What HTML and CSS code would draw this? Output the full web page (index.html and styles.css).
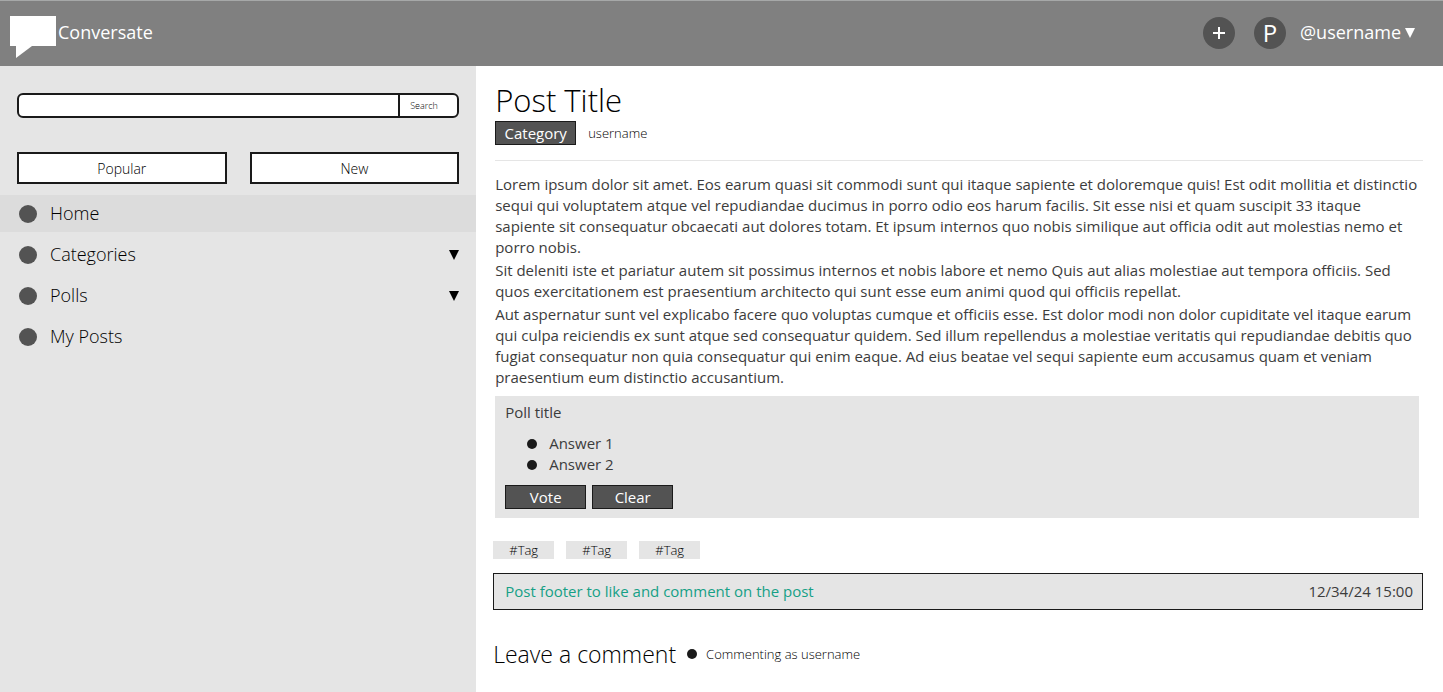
FILE: index.html
```html
<!DOCTYPE html>
<html lang="en">
<head>
<meta charset="utf-8">
<meta name="viewport" content="width=device-width, initial-scale=1">
<title>Conversate</title>
<link rel="stylesheet" href="styles.css">
</head>
<body>
<header class="topbar">
  <a class="brand" href="#">
    <svg class="brand-logo" viewBox="0 0 46 43" aria-hidden="true"><path d="M0 1H46V31H22L6 43V31H0Z" fill="#fff"/></svg>
    <span>Conversate</span>
  </a>
  <div class="topbar-actions">
    <div class="round-buttons">
      <button class="round-button" type="button" aria-label="New post"><svg class="plus" viewBox="0 0 12 12" aria-hidden="true"><path d="M6 0V12M0 6H12" stroke="#fff" stroke-width="2"/></svg></button>
      <button class="round-button" type="button">P</button>
    </div>
    <button class="account" type="button">@username<svg class="caret" viewBox="0 0 10 10" aria-hidden="true"><path d="M0 0H10L5 10Z" fill="currentColor"/></svg></button>
  </div>
</header>
<div class="layout">
  <aside class="sidebar">
    <form class="search">
      <input class="search-input" type="search" aria-label="Search posts">
      <button class="search-button" type="button">Search</button>
    </form>
    <div class="sorts">
      <button class="sort" type="button">Popular</button>
      <button class="sort" type="button">New</button>
    </div>
    <nav class="menu">
      <a class="menu-item active" href="#"><span class="menu-dot"></span>Home</a>
      <a class="menu-item" href="#"><span class="menu-dot"></span>Categories<svg class="caret menu-caret" viewBox="0 0 10 10" aria-hidden="true"><path d="M0 0H10L5 10Z" fill="currentColor"/></svg></a>
      <a class="menu-item" href="#"><span class="menu-dot"></span>Polls<svg class="caret menu-caret" viewBox="0 0 10 10" aria-hidden="true"><path d="M0 0H10L5 10Z" fill="currentColor"/></svg></a>
      <a class="menu-item" href="#"><span class="menu-dot"></span>My Posts</a>
    </nav>
  </aside>
  <main class="content">
    <article>
      <header class="post-header">
        <h1 class="post-title">Post Title</h1>
        <div class="byline">
          <button class="dark-button" type="button">Category</button>
          <span class="small">username</span>
        </div>
      </header>
      <div class="post-body">
        <p>Lorem ipsum dolor sit amet. Eos earum quasi sit commodi sunt qui itaque sapiente et doloremque quis! Est odit mollitia et distinctio sequi qui voluptatem atque vel repudiandae ducimus in porro odio eos harum facilis. Sit esse nisi et quam suscipit 33 itaque sapiente sit consequatur obcaecati aut dolores totam. Et ipsum internos quo nobis similique aut officia odit aut molestias nemo et porro nobis.</p>
        <p>Sit deleniti iste et pariatur autem sit possimus internos et nobis labore et nemo Quis aut alias molestiae aut tempora officiis. Sed quos exercitationem est praesentium architecto qui sunt esse eum animi quod qui officiis repellat.</p>
        <p>Aut aspernatur sunt vel explicabo facere quo voluptas cumque et officiis esse. Est dolor modi non dolor cupiditate vel itaque earum qui culpa reiciendis ex sunt atque sed consequatur quidem. Sed illum repellendus a molestiae veritatis qui repudiandae debitis quo fugiat consequatur non quia consequatur qui enim eaque. Ad eius beatae vel sequi sapiente eum accusamus quam et veniam praesentium eum distinctio accusantium.</p>
      </div>
      <form class="poll">
        <h2 class="poll-title">Poll title</h2>
        <div class="answers">
          <label class="answer"><input class="answer-dot" type="radio" name="answer">Answer 1</label>
          <label class="answer"><input class="answer-dot" type="radio" name="answer">Answer 2</label>
        </div>
        <div class="poll-actions">
          <button class="dark-button" type="button">Vote</button>
          <button class="dark-button" type="button">Clear</button>
        </div>
      </form>
      <div class="tags">
        <a class="tag" href="#">#Tag</a>
        <a class="tag" href="#">#Tag</a>
        <a class="tag" href="#">#Tag</a>
      </div>
      <footer class="post-footer">
        <span class="footer-note">Post footer to like and comment on the post</span>
        <time>12/34/24 15:00</time>
      </footer>
    </article>
    <section class="comment">
      <h2 class="comment-title">Leave a comment</h2>
      <span class="dot"></span>
      <span class="small">Commenting as username</span>
    </section>
  </main>
</div>
</body>
</html>
```
FILE: styles.css
```css
* { box-sizing: border-box; }

body {
  margin: 0;
  min-height: 100vh;
  display: flex;
  flex-direction: column;
  font-family: "Open Sans", "Noto Sans", sans-serif;
  font-size: 15px;
  font-weight: 300;
  line-height: 21px;
  color: #000;
  background: #fff;
}

h1, h2, p { margin: 0; font-weight: inherit; }
a { color: inherit; text-decoration: none; }
button, input { font: inherit; color: inherit; margin: 0; padding: 0; }
button { cursor: pointer; }

.topbar {
  display: flex;
  align-items: center;
  justify-content: space-between;
  height: 66px;
  padding: 0 28px 2px 10px;
  background: #808080;
  border-top: 1px solid #a6a8a8;
  color: #fff;
  font-size: 18px;
  font-weight: 400;
}
.brand { display: flex; align-items: center; gap: 2px; }
.brand-logo { width: 46px; height: 43px; margin-top: 7px; }
.topbar-actions { display: flex; align-items: center; gap: 14px; }
.round-buttons { display: flex; gap: 19px; }
.round-button {
  display: flex;
  align-items: center;
  justify-content: center;
  width: 32px;
  height: 32px;
  border: 0;
  border-radius: 50%;
  background: #535353;
  font-size: 24px;
}
.plus { width: 12px; height: 12px; }
.account {
  display: flex;
  align-items: center;
  gap: 4px;
  border: 0;
  background: none;
}
.caret { width: 10px; height: 10px; }

.layout {
  flex: 1;
  display: grid;
  grid-template-columns: 33fr 67fr;
}
.sidebar { background: #e5e5e5; padding-top: 27px; }

.search {
  display: flex;
  height: 25px;
  margin: 0 17px;
  border: 2px solid #1a1a1a;
  border-radius: 6px;
  background: #fff;
  overflow: hidden;
}
.search-input {
  flex: 1;
  min-width: 0;
  border: 0;
  background: none;
  outline: 0;
  padding: 0 8px;
}
.search-button {
  width: 59px;
  padding-left: 10px;
  border: 0;
  border-left: 2px solid #1a1a1a;
  background: none;
  font-size: 9px;
  text-align: left;
}
.sorts {
  display: grid;
  grid-template-columns: 1fr 1fr;
  gap: 23px;
  margin: 34px 17px 11px;
}
.sort {
  height: 32px;
  border: 2px solid #1a1a1a;
  background: #fff;
  font-size: 14px;
}
.menu { display: flex; flex-direction: column; gap: 4px; }
.menu-item {
  display: flex;
  align-items: center;
  height: 37px;
  padding: 0 17px 0 19px;
  font-size: 18px;
}
.active { background: #dcdcdc; }
.menu-dot {
  width: 18px;
  height: 18px;
  margin-right: 13px;
  border-radius: 50%;
  background: #535353;
}
.menu-caret { margin-left: auto; }

.content { padding: 13px 20px 20px 17px; }
.post-header {
  margin-left: 2px;
  padding-bottom: 15px;
  border-bottom: 1px solid #e5e5e5;
}
.post-title { font-size: 31px; line-height: 42px; }
.byline { display: flex; align-items: center; gap: 12px; }
.dark-button {
  width: 81px;
  height: 24px;
  border: 1px solid #1a1a1a;
  background: #535353;
  color: #fff;
  font-weight: 400;
}
.small { font-size: 13px; }
.post-body, .poll, .post-footer { color: #3c3c3c; font-weight: 400; }
.post-body {
  display: flex;
  flex-direction: column;
  gap: 2px;
  padding: 13px 0 8px 2px;
}
.poll {
  margin: 0 4px 0 2px;
  padding: 6px 10px 9px;
  background: #e5e5e5;
}
.poll-title { font-size: 15px; }
.answers { padding: 10px 0 10px 22px; }
.answer { display: flex; align-items: center; gap: 12px; }
.answer-dot {
  appearance: none;
  width: 10px;
  height: 10px;
  border-radius: 50%;
  background: #1a1a1a;
}
.poll-actions { display: flex; gap: 6px; }
.tags { display: flex; gap: 12px; margin: 23px 0 14px; }
.tag {
  width: 61px;
  line-height: 18px;
  background: #e5e5e5;
  font-size: 13px;
  text-align: center;
}
.post-footer {
  display: flex;
  align-items: center;
  justify-content: space-between;
  height: 37px;
  padding: 0 9px 0 11px;
  border: 1px solid #1a1a1a;
  background: #e5e5e5;
}
.footer-note { color: #16a085; }
.comment { display: flex; align-items: center; margin-top: 28px; }
.comment-title { font-size: 23px; line-height: 32px; }
.dot {
  width: 10px;
  height: 10px;
  margin: 0 9px 0 11px;
  border-radius: 50%;
  background: #1a1a1a;
}
```
